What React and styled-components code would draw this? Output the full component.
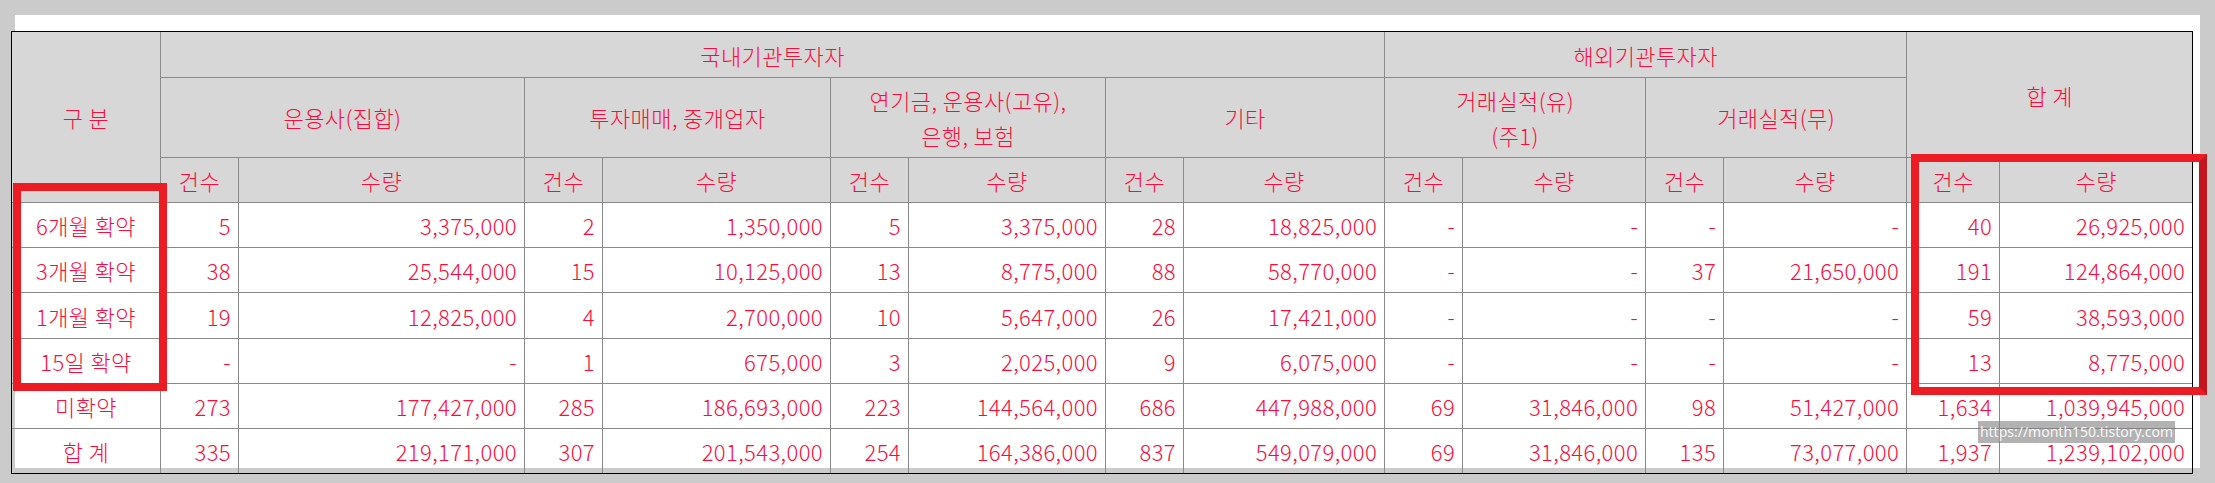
import React from 'react';
import styled, { createGlobalStyle } from 'styled-components';

const GlobalStyle = createGlobalStyle`
  html, body {
    margin: 0;
    padding: 0;
    background: #cbcbcb;
  }
  body {
    font-family: "Noto Sans CJK KR", "Noto Sans", sans-serif;
  }
`;

const widths = [149, 78, 286, 78, 228, 78, 197, 78, 201, 78, 183, 78, 183, 93, 193];

const groups = [
  ['운용사(집합)'],
  ['투자매매, 중개업자'],
  ['연기금, 운용사(고유),', '은행, 보험'],
  ['기타'],
  ['거래실적(유)', '(주1)'],
  ['거래실적(무)'],
];

const rows = [
  ['6개월 확약', '5', '3,375,000', '2', '1,350,000', '5', '3,375,000', '28', '18,825,000', '-', '-', '-', '-', '40', '26,925,000'],
  ['3개월 확약', '38', '25,544,000', '15', '10,125,000', '13', '8,775,000', '88', '58,770,000', '-', '-', '37', '21,650,000', '191', '124,864,000'],
  ['1개월 확약', '19', '12,825,000', '4', '2,700,000', '10', '5,647,000', '26', '17,421,000', '-', '-', '-', '-', '59', '38,593,000'],
  ['15일 확약', '-', '-', '1', '675,000', '3', '2,025,000', '9', '6,075,000', '-', '-', '-', '-', '13', '8,775,000'],
  ['미확약', '273', '177,427,000', '285', '186,693,000', '223', '144,564,000', '686', '447,988,000', '69', '31,846,000', '98', '51,427,000', '1,634', '1,039,945,000'],
  ['합 계', '335', '219,171,000', '307', '201,543,000', '254', '164,386,000', '837', '549,079,000', '69', '31,846,000', '135', '73,077,000', '1,937', '1,239,102,000'],
];

const rowHeights = [45, 45, 46, 45, 45, 45];

const App = () => {
  return (
    <>
      <GlobalStyle />
      <Page>
        <Panel>
          <Table>
            <colgroup>
              {widths.map((w, i) => (
                <Col key={i} $w={w} />
              ))}
            </colgroup>
            <thead>
              <Row $h={46}>
                <Th rowSpan={3}>구 분</Th>
                <Th colSpan={8}>국내기관투자자</Th>
                <Th colSpan={4}>해외기관투자자</Th>
                <Th colSpan={2} rowSpan={2}>합 계</Th>
              </Row>
              <Row $h={80}>
                {groups.map((g, i) => (
                  <Th key={i} colSpan={2}>
                    {g.map((line, j) => (
                      <Line key={j}>{line}</Line>
                    ))}
                  </Th>
                ))}
              </Row>
              <Row $h={45}>
                {Array.from({ length: 7 }).map((_, i) => (
                  <React.Fragment key={i}>
                    <Th>건수</Th>
                    <Th>수량</Th>
                  </React.Fragment>
                ))}
              </Row>
            </thead>
            <tbody>
              {rows.map((r, i) => (
                <Row key={i} $h={rowHeights[i]}>
                  {r.map((v, j) => (
                    <Td key={j} $label={j === 0}>
                      {v}
                    </Td>
                  ))}
                </Row>
              ))}
            </tbody>
          </Table>
          <LeftMark />
          <TotalMark />
          <Watermark>https://month150.tistory.com</Watermark>
        </Panel>
      </Page>
    </>
  );
};

const Page = styled.div`
  width: 2215px;
  height: 483px;
  padding: 15px 0 0 15px;
  box-sizing: border-box;
  overflow: hidden;
`;

const Panel = styled.div`
  position: relative;
  width: 2185px;
  height: 453px;
  box-sizing: border-box;
  padding-top: 16px;
  background: #ffffff;
`;

const Table = styled.table`
  margin-left: -4px;
  width: 2181px;
  table-layout: fixed;
  border-collapse: collapse;
  outline: 1px solid #000000;
  outline-offset: -1px;
  color: #ff0a3c;
  font-size: 22px;
  font-weight: 300;
  letter-spacing: 0.4px;
`;

const Col = styled.col`
  width: ${(p) => p.$w}px;
`;

const Row = styled.tr`
  height: ${(p) => p.$h}px;
`;

const Th = styled.th`
  border: 1px solid #8a8a8a;
  background: #d7d7d7;
  font-weight: 300;
  padding: 0;
  text-align: center;
  vertical-align: middle;
  white-space: nowrap;
`;

const Line = styled.div`
  line-height: 35px;
`;

const Td = styled.td`
  border: 1px solid #8a8a8a;
  padding: 0 ${(p) => (p.$label ? 0 : 7)}px 0 0;
  text-align: ${(p) => (p.$label ? 'center' : 'right')};
  vertical-align: middle;
  white-space: nowrap;
  line-height: 26px;
`;

const LeftMark = styled.div`
  position: absolute;
  left: -2px;
  top: 168px;
  width: 154px;
  height: 208px;
  box-sizing: border-box;
  border: 8px solid #ed1c24;
`;

const TotalMark = styled.div`
  position: absolute;
  left: 1896px;
  top: 139px;
  width: 296px;
  height: 241px;
  box-sizing: border-box;
  border: 8px solid #ed1c24;
  border-right-color: #c4161e;
`;

const Watermark = styled.div`
  position: absolute;
  left: 1963px;
  top: 406px;
  width: 197px;
  height: 22px;
  background: rgba(130, 130, 130, 0.62);
  color: rgba(255, 255, 255, 0.92);
  font-family: "Noto Sans", sans-serif;
  font-size: 14px;
  line-height: 22px;
  text-align: center;
  white-space: nowrap;
  overflow: hidden;
`;

export default App;
